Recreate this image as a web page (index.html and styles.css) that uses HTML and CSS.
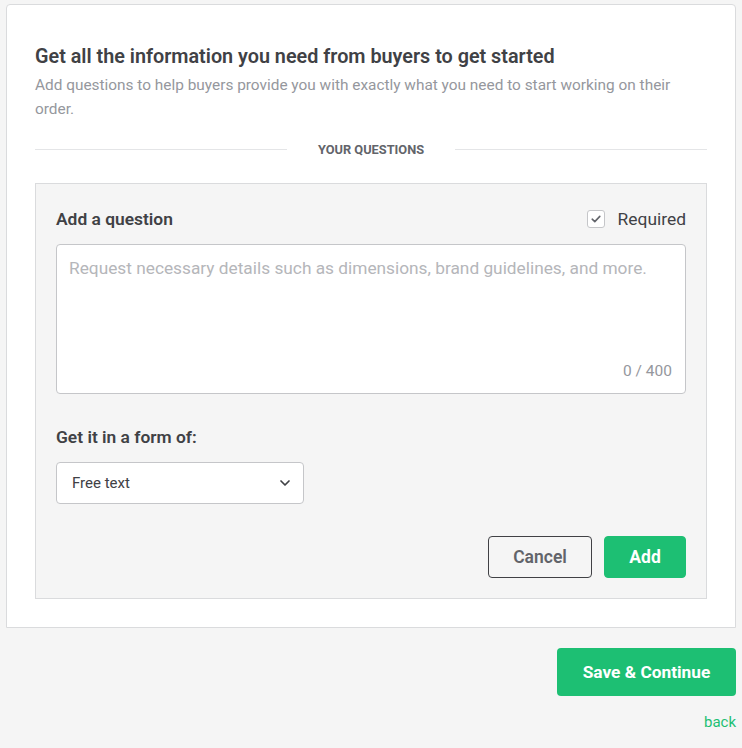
FILE: index.html
```
<!DOCTYPE html>
<html>
<head>
<meta charset="utf-8">
<link rel="stylesheet" href="styles.css">
</head>
<body>
<div class="page">
  <div class="card">
    <h1 class="title">Get all the information you need from buyers to get started</h1>
    <p class="subtitle">Add questions to help buyers provide you with exactly what you need to start working on their order.</p>
    <div class="divider"><span class="line"></span><span class="divider-text">YOUR QUESTIONS</span><span class="line"></span></div>
    <div class="qbox">
      <div class="qhead">
        <span class="label">Add a question</span>
        <label class="req"><span class="check"><svg width="10" height="8" viewBox="0 0 10 8"><path d="M1.2 4.2 L3.8 6.6 L8.8 1.4" fill="none" stroke="#62646a" stroke-width="1.6" stroke-linecap="round" stroke-linejoin="round"/></svg></span><span class="req-text">Required</span></label>
      </div>
      <div class="textarea">
        <div class="placeholder">Request necessary details such as dimensions, brand guidelines, and more.</div>
        <div class="counter">0 / 400</div>
      </div>
      <div class="label form-label">Get it in a form of:</div>
      <div class="select">
        <span>Free text</span>
        <svg width="12" height="8" viewBox="0 0 12 8"><path d="M2 2 L6 6 L10 2" fill="none" stroke="#404145" stroke-width="1.7" stroke-linecap="round" stroke-linejoin="round"/></svg>
      </div>
      <div class="actions">
        <button class="btn cancel">Cancel</button>
        <button class="btn add">Add</button>
      </div>
    </div>
  </div>
  <div class="footer">
    <button class="btn save">Save &amp; Continue</button>
    <a class="back" href="#">back</a>
  </div>
</div>
</body>
</html>
```
FILE: styles.css
```
* { box-sizing: border-box; }
html, body { margin: 0; padding: 0; }
body {
  background: #f5f5f5;
  font-family: Roboto, "Liberation Sans", sans-serif;
  color: #404145;
}
.page { padding: 4px 6px 0 6px; }
.card {
  background: #fff;
  border: 1px solid #dadbdd;
  border-radius: 4px 4px 0 0;
  padding: 40px 28px 28px 28px;
}
.title {
  margin: 0;
  font-size: 19.8px;
  font-weight: 600;
  line-height: 24px;
  color: #404145;
}
.subtitle {
  margin: 4px 0 0 0;
  font-size: 15.4px;
  line-height: 24px;
  color: #95979d;
}
.divider {
  display: flex;
  align-items: center;
  margin-top: 18px;
  height: 20px;
}
.line { flex: 1; height: 1px; background: #e4e5e7; }
.divider-text {
  padding: 0 31px;
  font-size: 12.8px;
  font-weight: 700;
  color: #62646a;
}
.qbox {
  margin-top: 24px;
  background: #f5f5f5;
  border: 1px solid #dadbdd;
  padding: 24px 20px 20px 20px;
}
.qhead {
  display: flex;
  justify-content: space-between;
  align-items: center;
  height: 22px;
}
.label { font-size: 17.4px; font-weight: 600; color: #404145; }
.req { display: flex; align-items: center; }
.check {
  width: 18px; height: 18px;
  border: 1px solid #c5c6c9;
  border-radius: 3px;
  background: #fff;
  display: flex; align-items: center; justify-content: center;
}
.req-text { margin-left: 13px; font-size: 17.4px; color: #404145; }
.textarea {
  margin-top: 14px;
  height: 150px;
  background: #fff;
  border: 1px solid #c5c6c9;
  border-radius: 4px;
  padding: 12px 13px 13px 12px;
  display: flex;
  flex-direction: column;
  justify-content: space-between;
}
.placeholder { font-size: 17.3px; color: #b5b6ba; line-height: 22px; }
.counter { text-align: right; font-size: 15.5px; color: #95979d; }
.form-label { margin-top: 32px; line-height: 22px; }
.select {
  margin-top: 14px;
  width: 248px;
  height: 42px;
  background: #fff;
  border: 1px solid #c5c6c9;
  border-radius: 4px;
  display: flex;
  align-items: center;
  justify-content: space-between;
  padding: 0 12px 0 15px;
  font-size: 15px;
  color: #404145;
}
.actions {
  display: flex;
  justify-content: flex-end;
  gap: 12px;
  margin-top: 32px;
}
.btn {
  font-family: Roboto, "Liberation Sans", sans-serif;
  height: 42px;
  border-radius: 4px;
  font-size: 17.5px;
  font-weight: 600;
  cursor: pointer;
}
.cancel {
  width: 104px;
  background: transparent;
  border: 1px solid #404145;
  color: #62646a;
}
.add {
  width: 82px;
  background: #1dbf73;
  border: 1px solid #1dbf73;
  color: #fff;
  font-weight: 700;
}
.footer {
  display: flex;
  flex-direction: column;
  align-items: flex-end;
  padding-top: 20px;
}
.save {
  width: 179px;
  height: 48px;
  background: #1dbf73;
  border: none;
  color: #fff;
  font-weight: 700;
  font-size: 17.3px;
}
.back {
  margin-top: 17px;
  font-size: 15px;
  color: #1dbf73;
  text-decoration: none;
}
```
